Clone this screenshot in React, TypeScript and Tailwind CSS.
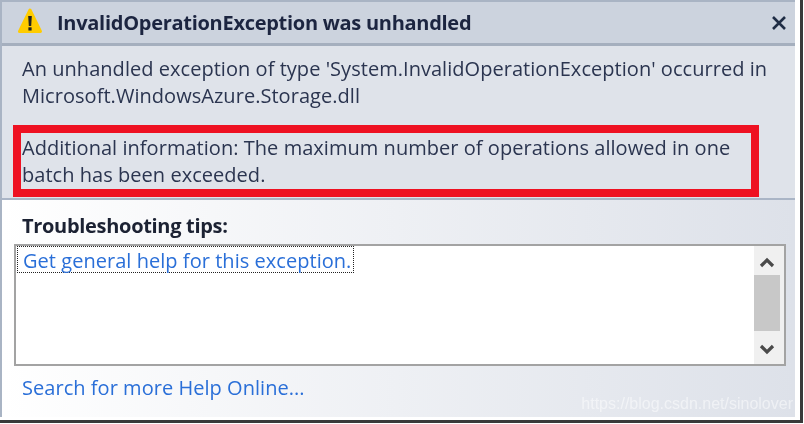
import React from 'react';

const WarningIcon = () => (
  <svg width="26" height="28" viewBox="0 0 26 28" className="shrink-0 -mt-[3px]">
    <path d="M13 3 L23.5 24.5 H2.5 Z" fill="#ffcc00" stroke="#ffcc00" strokeWidth="3" strokeLinejoin="round" />
    <path d="M11.2 9 H14.8 L14.2 19 H11.8 Z" fill="#222222" />
    <rect x="11.4" y="20.3" width="3.2" height="3.2" fill="#222222" />
  </svg>
);

const CloseIcon = () => (
  <svg width="16" height="16" viewBox="0 0 16 16">
    <path d="M2 2 L14 14 M14 2 L2 14" stroke="#1f2d45" strokeWidth="2.6" fill="none" />
  </svg>
);

const Chevron = ({ down }: { down?: boolean }) => (
  <svg width="16" height="12" viewBox="0 0 16 12">
    <path d={down ? 'M2 3 L8 9 L14 3' : 'M2 9 L8 3 L14 9'} stroke="#4a4a4a" strokeWidth="3.2" fill="none" />
  </svg>
);

export default function App() {
  return (
    <div className="w-[804px] h-[424px] overflow-hidden bg-white font-['Open_Sans','Noto_Sans',sans-serif]">
      {/* window with the hard shadow on the right and bottom */}
      <div className="relative w-[803px] h-[423px] pr-[5px] pb-[3px] border-r-[3px] border-b-[3px] border-[#3a3a3a]">
        <div className="flex flex-col h-full border-l-2 border-t-2 border-[#a9b4c4] blur-[0.4px]">
          {/* Header */}
          <div className="h-[41px] shrink-0 flex items-center pl-[15px] pr-[8px] bg-[#ccd3de] border-b-[3px] border-[#a5afbe] box-content">
            <WarningIcon />
            <h1 className="ml-[14px] flex-1 text-[20px] font-bold tracking-[-0.28px] text-[#1c2540]">InvalidOperationException was unhandled</h1>
            <CloseIcon />
          </div>

          {/* Message */}
          <div className="h-[143px] shrink-0 bg-[#dfe3ea] border-b-2 border-[#aab5c6] pt-[9px] text-[20px] leading-[27px] tracking-[0.04px] text-[#2b3550] box-content">
            <p className="pl-[20px]">An unhandled exception of type 'System.InvalidOperationException' occurred in<br />Microsoft.WindowsAzure.Storage.dll</p>
            <div className="ml-[11px] mt-[16px] w-[746px] h-[72px] border-[8px] border-[#ee1122] pl-[1px] pt-[1px] text-[#2b3550]">
              <p>Additional information: The maximum number of operations allowed in one<br />batch has been exceeded.</p>
            </div>
          </div>

          {/* Tips */}
          <div className="relative flex-1 flex flex-col bg-gradient-to-r from-white to-[#dde1e9]">
            <h2 className="pl-[20px] pt-[12px] text-[20px] leading-[27px] font-bold tracking-[-0.31px] text-[#1c2233]">Troubleshooting tips:</h2>
            <div className="ml-[12px] mt-[5px] w-[772px] h-[122px] flex bg-white border-2 border-[#a3a3a3]">
              <div className="flex-1">
                <a className="inline-block ml-[1px] border border-dotted border-[#222222] pt-[2px] pl-[5px] pr-[2px] leading-[23px] text-[20px] tracking-[0.04px] text-[#2a6fd8]">Get general help for this exception.</a>
              </div>
              <div className="w-[30px] flex flex-col items-center bg-[#f0f0f0] pr-[4px]">
                <div className="h-[29px] pt-[5px] flex items-center justify-center"><Chevron /></div>
                <div className="h-[56px] w-full bg-[#c8c8c8]" />
                <div className="flex-1 pt-[3px] flex items-center justify-center"><Chevron down /></div>
              </div>
            </div>
            <a className="pl-[20px] mt-[8px] text-[20px] leading-[27px] tracking-[0.04px] text-[#2a6fd8]">Search for more Help Online...</a>
            <span className="absolute right-[2px] bottom-[3px] font-['Liberation_Sans',sans-serif] text-[16px] leading-[20px] text-white opacity-50">https://blog.csdn.net/sinolover</span>
          </div>
        </div>
      </div>
    </div>
  );
}
